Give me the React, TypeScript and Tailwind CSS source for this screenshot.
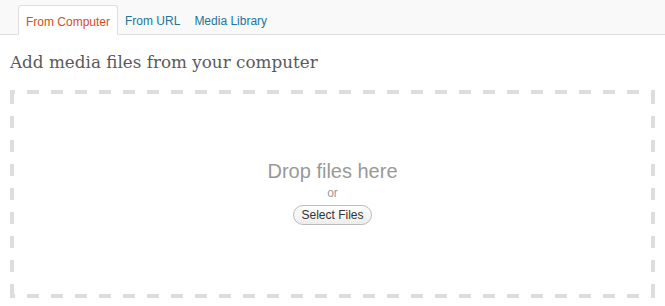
import React from "react";

export default function App() {
  return (
    <div className="w-[665px] h-[306px] bg-white overflow-hidden" style={{ fontFamily: '"Liberation Sans", Arial, sans-serif' }}>
      <div className="h-[35px] bg-[#f9f9f9] border-b border-[#dfdfdf] flex items-end pl-[18px]">
        <div className="h-[30px] -mb-px px-[7px] pt-[3px] bg-white border border-[#dfdfdf] border-b-white rounded-t-[3px] flex items-center text-[12px] text-[#d54e21]">
          From Computer
        </div>
        <div className="h-[30px] px-[7px] pt-[3px] flex items-center text-[12px] text-[#21759b]">From URL</div>
        <div className="h-[30px] px-[7px] pt-[3px] flex items-center text-[12px] text-[#21759b]">Media Library</div>
      </div>
      <div className="px-[10px]">
        <h3
          className="mt-[14px] h-[26px] text-[16.8px] leading-[26px] text-[#5a5a5a]"
          style={{ fontFamily: '"DejaVu Serif", Georgia, serif' }}
        >
          Add media files from your computer
        </h3>
        <div className="mt-[15px] w-[645px] h-[208px] [background-image:repeating-linear-gradient(90deg,#dddddd_0_5px,transparent_5px_17px,#dddddd_17px_24px),repeating-linear-gradient(90deg,#dddddd_0_5px,transparent_5px_17px,#dddddd_17px_24px),repeating-linear-gradient(180deg,transparent_0_2px,#dddddd_2px_14px,transparent_14px_24px),repeating-linear-gradient(180deg,transparent_0_2px,#dddddd_2px_14px,transparent_14px_24px)] [background-size:100%_4px,100%_4px,4px_100%,4px_100%] [background-position:0_0,0_100%,0_0,100%_0] [background-repeat:no-repeat] flex flex-col items-center pt-[69px]">
          <div className="text-[20px] leading-[24px] text-[#999999]">Drop files here</div>
          <div className="mt-[1px] text-[12px] leading-[18px] text-[#999999]">or</div>
          <button className="mt-[3px] h-[20px] px-[7px] rounded-full border border-[#bbbbbb] bg-gradient-to-b from-white to-[#ededed] text-[12px] leading-[18px] text-[#333333]">
            Select Files
          </button>
        </div>
      </div>
    </div>
  );
}
